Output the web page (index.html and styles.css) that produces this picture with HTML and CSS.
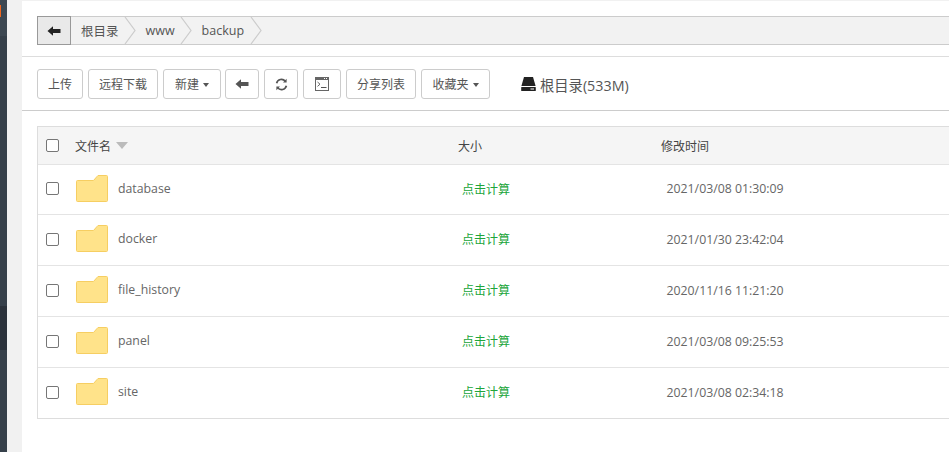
FILE: index.html
```html
<!DOCTYPE html>
<html lang="en">
<head>
  <meta charset="UTF-8" />
  <meta name="viewport" content="width=device-width, initial-scale=1.0"/>
  <title>文件管理</title>
  <link rel="stylesheet" href="styles.css">
</head>
<body>
  <aside class="sidebar">
    <div class="side-top"><span class="side-mark"></span></div>
    <div class="side-fill"></div>
    <div class="side-active"></div>
    <div class="side-end"></div>
  </aside>

  <main class="panel">
    <!-- Breadcrumb -->
    <div class="crumb-wrap">
      <div class="crumbs">
        <button class="crumb-back">
          <svg width="14" height="12" viewBox="0 0 14 12"><path d="M0.5 6 6 1.2V4h7.5v4H6v2.8z" fill="#222"/></svg>
        </button>
        <a class="crumb">根目录<svg class="crumb-arrow" width="12" height="27" viewBox="0 0 12 27"><path d="M1 0 11 13.5 1 27" fill="none" stroke="#ccc" stroke-width="1.2"/></svg></a>
        <a class="crumb">www<svg class="crumb-arrow" width="12" height="27" viewBox="0 0 12 27"><path d="M1 0 11 13.5 1 27" fill="none" stroke="#ccc" stroke-width="1.2"/></svg></a>
        <a class="crumb">backup<svg class="crumb-arrow" width="12" height="27" viewBox="0 0 12 27"><path d="M1 0 11 13.5 1 27" fill="none" stroke="#ccc" stroke-width="1.2"/></svg></a>
      </div>
    </div>

    <!-- Toolbar -->
    <div class="toolbar">
      <button class="btn w-46">上传</button>
      <button class="btn w-70">远程下载</button>
      <button class="btn w-58">新建<span class="caret"></span></button>
      <button class="btn w-34 tight">
        <svg width="14" height="12" viewBox="0 0 14 12"><path d="M0.5 6 6 1.2V4h7.5v4H6v2.8z" fill="#555"/></svg>
      </button>
      <button class="btn w-34">
        <svg width="13" height="13" viewBox="0 0 13 13" fill="none" stroke="#555" stroke-width="1.7"><path d="M1.6 5.2A5 5 0 0 1 10.3 3.2"/><path d="M11.4 7.8A5 5 0 0 1 2.7 9.8"/><path d="M11.6 0.8v3.7H8z" fill="#555" stroke="none"/><path d="M1.4 12.2V8.5H5z" fill="#555" stroke="none"/></svg>
      </button>
      <button class="btn w-38">
        <svg width="14" height="14" viewBox="0 0 14 14"><rect x="0.5" y="0.5" width="13" height="13" fill="#fff" stroke="#666"/><rect x="0" y="0" width="14" height="3" fill="#666"/><path d="M9 1.5h1M11 1.5h1" stroke="#fff"/><path d="M2.5 5 5 7.2 2.5 9.4" fill="none" stroke="#666"/><path d="M6 10.5h5.5" stroke="#555"/></svg>
      </button>
      <button class="btn w-70">分享列表</button>
      <button class="btn w-69">收藏夹<span class="caret"></span></button>
      <div class="disk">
        <svg width="15" height="14" viewBox="0 0 15 14"><path d="M3 0h9l2.6 9H.4z" fill="#222"/><rect x="0.2" y="10" width="14.6" height="4" rx="0.6" fill="#222"/><rect x="9.5" y="11.5" width="3.5" height="1" fill="#fff"/></svg>
        根目录(533M)
      </div>
    </div>

    <!-- File list -->
    <div class="list-wrap">
      <div class="file-list">
        <div class="row head">
          <span class="col-check"><span class="check"></span></span>
          <span class="col-name">文件名<span class="sort"></span></span>
          <span class="col-size">大小</span>
          <span class="col-time">修改时间</span>
        </div>
        <div class="row">
          <span class="col-check"><span class="check"></span></span>
          <span class="col-name"><svg class="folder" width="32" height="27" viewBox="0 0 32 27"><path d="M1.5 5.5H17.5L21 1.5 22 .5H30.5A1 1 0 0 1 31.5 1.5V25.5A1 1 0 0 1 30.5 26.5H1.5A1 1 0 0 1 .5 25.5V6.5A1 1 0 0 1 1.5 5.5Z" fill="#ffe38a" stroke="#f6ce62"/></svg>database</span>
          <span class="col-size calc">点击计算</span>
          <span class="col-time date">2021/03/08 01:30:09</span>
        </div>
        <div class="row">
          <span class="col-check"><span class="check"></span></span>
          <span class="col-name"><svg class="folder" width="32" height="27" viewBox="0 0 32 27"><path d="M1.5 5.5H17.5L21 1.5 22 .5H30.5A1 1 0 0 1 31.5 1.5V25.5A1 1 0 0 1 30.5 26.5H1.5A1 1 0 0 1 .5 25.5V6.5A1 1 0 0 1 1.5 5.5Z" fill="#ffe38a" stroke="#f6ce62"/></svg>docker</span>
          <span class="col-size calc">点击计算</span>
          <span class="col-time date">2021/01/30 23:42:04</span>
        </div>
        <div class="row">
          <span class="col-check"><span class="check"></span></span>
          <span class="col-name"><svg class="folder" width="32" height="27" viewBox="0 0 32 27"><path d="M1.5 5.5H17.5L21 1.5 22 .5H30.5A1 1 0 0 1 31.5 1.5V25.5A1 1 0 0 1 30.5 26.5H1.5A1 1 0 0 1 .5 25.5V6.5A1 1 0 0 1 1.5 5.5Z" fill="#ffe38a" stroke="#f6ce62"/></svg>file_history</span>
          <span class="col-size calc">点击计算</span>
          <span class="col-time date">2020/11/16 11:21:20</span>
        </div>
        <div class="row">
          <span class="col-check"><span class="check"></span></span>
          <span class="col-name"><svg class="folder" width="32" height="27" viewBox="0 0 32 27"><path d="M1.5 5.5H17.5L21 1.5 22 .5H30.5A1 1 0 0 1 31.5 1.5V25.5A1 1 0 0 1 30.5 26.5H1.5A1 1 0 0 1 .5 25.5V6.5A1 1 0 0 1 1.5 5.5Z" fill="#ffe38a" stroke="#f6ce62"/></svg>panel</span>
          <span class="col-size calc">点击计算</span>
          <span class="col-time date">2021/03/08 09:25:53</span>
        </div>
        <div class="row">
          <span class="col-check"><span class="check"></span></span>
          <span class="col-name"><svg class="folder" width="32" height="27" viewBox="0 0 32 27"><path d="M1.5 5.5H17.5L21 1.5 22 .5H30.5A1 1 0 0 1 31.5 1.5V25.5A1 1 0 0 1 30.5 26.5H1.5A1 1 0 0 1 .5 25.5V6.5A1 1 0 0 1 1.5 5.5Z" fill="#ffe38a" stroke="#f6ce62"/></svg>site</span>
          <span class="col-size calc">点击计算</span>
          <span class="col-time date">2021/03/08 02:34:18</span>
        </div>
      </div>
    </div>
  </main>
</body>
</html>
```

FILE: styles.css
```css
html, body { height: 100%; }
body { margin: 0; display: flex; height: 452px; overflow: hidden; background: #f1f1f1; font-family: "Open Sans", "Noto Sans CJK SC", sans-serif; font-size: 12px; color: #555; }

.sidebar { width: 7px; display: flex; flex-direction: column; background: #36404a; }
.side-top { height: 36px; padding-top: 5px; box-sizing: border-box; background: #3d4852; }
.side-mark { display: block; width: 1px; height: 12px; background: #f0661e; }
.side-fill { height: 270px; background: #36404a; }
.side-active { height: 44px; background: #2b323b; }
.side-end { flex: 1; }

.panel { margin-left: 15px; margin-top: 1px; flex: 1; background: #fff; min-width: 0; }

.crumb-wrap { padding: 15px 0 11px 15px; border-bottom: 1px solid #ddd; }
.crumbs { display: flex; height: 27px; background: #f2f2f2; border: solid #ccc; border-width: 1px 0 1px 1px; }
.crumb-back { width: 34px; margin: -1px 0 -1px -1px; height: 29px; border: 1px solid #999; background: #e9e9e9; padding: 0; display: flex; align-items: center; justify-content: center; }
.crumb { display: flex; align-items: center; color: #555; font-size: 12.5px; padding-left: 10px; }
.crumb-arrow { margin-left: 5.5px; }
.crumb + .crumb { padding-left: 9.5px; }

.toolbar { display: flex; align-items: center; gap: 5px; height: 54px; padding-left: 15px; padding-top: 1px; box-sizing: border-box; border-bottom: 1px solid #ccc; }
.btn { height: 30px; padding: 0; border: 1px solid #ccc; border-radius: 3px; background: #fff; color: #555; font: inherit; display: flex; align-items: center; justify-content: center; }
.w-46 { width: 46px; }
.w-70 { width: 70px; }
.w-58 { width: 58px; }
.w-34 { width: 34px; }
.w-38 { width: 38px; }
.w-69 { width: 69px; }
.tight { margin-left: -1px; }
.caret { margin-left: 4px; border-top: 4px solid #555; border-left: 3.5px solid transparent; border-right: 3.5px solid transparent; margin-top: 2px; }
.disk { margin-left: 26px; display: flex; align-items: center; gap: 4px; font-size: 14.3px; color: #555; }

.list-wrap { padding: 15px 0 0 15px; }
.file-list { border: solid #ddd; border-width: 1px 0 1px 1px; }
.row { display: flex; align-items: center; height: 48px; padding-bottom: 2px; border-top: 1px solid #e4e4e4; }
.head + .row { height: 47px; }
.row.head { height: 37px; padding-bottom: 0; border-top: 0; background: #f5f5f5; color: #444; }
.col-check { width: 37px; padding-left: 8px; box-sizing: border-box; display: flex; }
.check { width: 11px; height: 11px; border: 1px solid #767676; border-radius: 2px; background: #fff; }
.col-name { width: 383px; display: flex; align-items: center; color: #666; font-size: 12.3px; padding-bottom: 1px; }
.head .col-name, .head .col-size, .head .col-time { color: #444; font-size: 12px; padding-bottom: 0; }
.folder { margin-right: 10px; margin-left: 1px; }
.sort { margin-left: 5px; border-top: 7px solid #bbb; border-left: 6px solid transparent; border-right: 6px solid transparent; }
.col-size { width: 203px; }
.calc { color: #20a53a; padding-left: 4px; box-sizing: border-box; }
.date { color: #666; padding-left: 5.5px; font-size: 12.3px; }
```
